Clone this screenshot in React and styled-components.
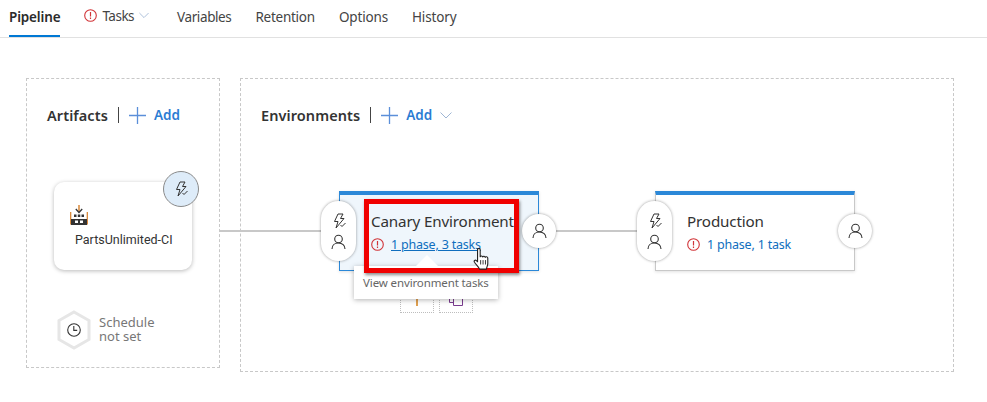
import styled, { createGlobalStyle } from "styled-components";

const Global = createGlobalStyle`
  html, body { margin: 0; padding: 0; background: #fff; }
  body { font-family: "Noto Sans", "Open Sans", sans-serif; color: #333; overflow: hidden; }
`;

const Page = styled.div`
  width: 987px;
  height: 402px;
`;

const TabBar = styled.div`
  display: flex;
  align-items: stretch;
  height: 37px;
  padding-left: 9px;
  gap: 24px;
  border-bottom: 1px solid #e1e1e1;
  box-sizing: content-box;
`;

const Tab = styled.div`
  display: flex;
  align-items: center;
  gap: 5px;
  height: 37px;
  box-sizing: border-box;
  font-size: 13.5px;
  letter-spacing: ${(p) => p.$track ?? -0.15}px;
  padding-bottom: ${(p) => (p.$raised ? "4px" : "2px")};
  color: ${(p) => (p.$active ? "#2b2b2b" : "#444")};
  font-weight: ${(p) => (p.$active ? 600 : 400)};
  border-bottom: 2px solid ${(p) => (p.$active ? "#0078d4" : "transparent")};
  margin-right: ${(p) => p.$gap || 0}px;
`;

const Canvas = styled.div`
  display: flex;
  align-items: flex-start;
  gap: 20px;
  padding: 40px 0 0 26px;
`;

const Panel = styled.div`
  box-sizing: border-box;
  width: ${(p) => p.$w}px;
  height: ${(p) => p.$h}px;
  border: 1px dashed #c8c8c8;
  padding: 25px 0 0 20px;
`;

const Header = styled.div`
  display: flex;
  align-items: center;
  height: 22px;
`;

const HeaderTitle = styled.span`
  font-size: 14.5px;
  font-weight: 600;
  letter-spacing: 0.08px;
  color: #333;
`;

const Divider = styled.span`
  width: 1px;
  height: 16px;
  background: #444;
  margin: 0 10px;
`;

const AddLink = styled.span`
  font-size: 13.5px;
  font-weight: 600;
  color: #2b7cd3;
  margin: 0 8px;
`;

const ArtifactCard = styled.div`
  position: relative;
  box-sizing: border-box;
  width: 138px;
  height: 88px;
  margin: 56px 0 0 7px;
  border-radius: 10px;
  background: #fff;
  box-shadow: 0 1px 4px rgba(0, 0, 0, 0.28);
  padding: 23px 0 0 16px;
`;

const ArtifactName = styled.div`
  font-family: Roboto, "Noto Sans", sans-serif;
  font-size: 12.5px;
  margin: 7px 0 0 5px;
  color: #333;
  white-space: nowrap;
`;

const TriggerBadge = styled.div`
  position: absolute;
  top: -11px;
  right: -7px;
  width: 36px;
  height: 36px;
  box-sizing: border-box;
  border-radius: 50%;
  border: 1px solid #8a8a8a;
  background: #deecf9;
  display: flex;
  align-items: center;
  justify-content: center;
`;

const Schedule = styled.div`
  display: flex;
  align-items: center;
  gap: 8px;
  margin: 40px 0 0 10px;
`;

const ScheduleText = styled.div`
  font-size: 13px;
  line-height: 14px;
  color: #777;
  padding-bottom: 2px;
`;

const Stage = styled.div`
  display: flex;
  align-items: center;
  margin: 65px 0 0 -42px;
`;

const Connector = styled.div`
  width: ${(p) => p.$w}px;
  height: 2px;
  background: #c8c8c8;
  flex: none;
`;

const Pill = styled.div`
  position: relative;
  z-index: 2;
  flex: none;
  box-sizing: border-box;
  width: 35px;
  height: 60px;
  margin-right: -17px;
  border-radius: 18px;
  background: #fff;
  box-shadow: 0 0 3px rgba(0, 0, 0, 0.4);
  display: flex;
  flex-direction: column;
  align-items: center;
  justify-content: center;
  gap: 5px;
`;

const Round = styled.div`
  position: relative;
  z-index: 2;
  flex: none;
  width: 34px;
  height: 34px;
  margin-left: -17px;
  border-radius: 50%;
  background: #fff;
  box-shadow: 0 0 3px rgba(0, 0, 0, 0.4);
  display: flex;
  align-items: center;
  justify-content: center;
`;

const EnvCard = styled.div`
  position: relative;
  flex: none;
  box-sizing: border-box;
  width: 200px;
  height: 80px;
  padding: 15px 0 0 31px;
  background: ${(p) => (p.$selected ? "#eff6fc" : "#fff")};
  border: 1px solid ${(p) => (p.$selected ? "#2b88d8" : "#c8c8c8")};
  border-top: 4px solid #2b88d8;
  box-shadow: 0 1px 3px rgba(0, 0, 0, 0.12);
`;

const EnvTitle = styled.div`
  font-size: 15.2px;
  line-height: 22px;
  color: #333;
  letter-spacing: -0.15px;
  white-space: nowrap;
`;

const EnvStatus = styled.div`
  display: flex;
  align-items: center;
  gap: 7px;
  height: 22px;
  margin-top: 1px;
`;

const TaskLink = styled.span`
  font-size: 12.5px;
  color: #106ebe;
  letter-spacing: -0.2px;
  text-decoration: ${(p) => (p.$hover ? "underline" : "none")};
  white-space: nowrap;
`;

const Highlight = styled.div`
  position: absolute;
  z-index: 5;
  left: 24px;
  top: 4px;
  width: 155px;
  height: 74px;
  box-sizing: border-box;
  border: 5px solid #f00000;
  box-shadow: 1px 2px 3px rgba(0, 0, 0, 0.45);
`;

const Tooltip = styled.div`
  position: absolute;
  z-index: 4;
  left: 14px;
  top: 71px;
  width: 144px;
  height: 33px;
  box-sizing: border-box;
  background: #fff;
  box-shadow: 0 1px 5px rgba(0, 0, 0, 0.3);
  font-size: 11.5px;
  letter-spacing: -0.12px;
  color: #666;
  padding: 9px 0 0 9px;
  white-space: nowrap;
  &::before {
    content: "";
    position: absolute;
    left: 62px;
    top: -11px;
    width: 0;
    height: 0;
    border-left: 11px solid transparent;
    border-right: 11px solid transparent;
    border-bottom: 11px solid #fff;
  }
`;

const Ghost = styled.div`
  position: absolute;
  z-index: 1;
  left: ${(p) => p.$left}px;
  top: 92px;
  width: 34px;
  height: 26px;
  box-sizing: border-box;
  border: 1px dotted #bdbdbd;
  padding-bottom: 6px;
  display: flex;
  align-items: flex-end;
  justify-content: center;
  & > svg {
    display: block;
  }
`;

const Cursor = styled.svg`
  position: absolute;
  z-index: 6;
  left: 133px;
  top: 53px;
`;

const Bolt = ({ size = 16 }) => (
  <svg width={size} height={size} viewBox="0 0 16 16" fill="none" stroke="#333" strokeWidth="1">
    <path d="M7 1h5L9.500 5.500H13L5 15l2-6.500H3.500z" />
    <path d="M9.500 12l1.500 1.500 3.500-3.500" />
  </svg>
);

const Person = () => (
  <svg width="15" height="16" viewBox="0 0 15 16" fill="none" stroke="#333" strokeWidth="1.1">
    <circle cx="7.500" cy="5" r="3.800" />
    <path d="M1 15c0-3.600 2.700-6 6.500-6s6.500 2.400 6.500 6" />
  </svg>
);

const Warn = () => (
  <svg width="13" height="13" viewBox="0 0 13 13" fill="none" stroke="#d13438">
    <circle cx="6.500" cy="6.500" r="5.800" strokeWidth="1.100" />
    <path d="M6.500 3v4.400M6.500 8.600v1.300" strokeWidth="1.200" />
  </svg>
);

const Plus = () => (
  <svg width="17" height="17" viewBox="0 0 17 17" stroke="#5b8fd9" strokeWidth="1.300">
    <path d="M8.500 0v17M0 8.500h17" />
  </svg>
);

const Chevron = ({ w = 12 }) => (
  <svg width={w} height="7" viewBox="0 0 12 7" fill="none" stroke="#9fb6d4" strokeWidth="1">
    <path d="M.5.5 6 6l5.500-5.500" />
  </svg>
);

const BuildIcon = () => (
  <svg width="18" height="20" viewBox="0 0 18 20" style={{ display: "block" }}>
    <path d="M9 0v6.500" stroke="#d67f2a" strokeWidth="1.400" />
    <path d="M5.800 4 9 7.500 12.200 4" fill="none" stroke="#333" strokeWidth="1.300" />
    <path d="M.7 7v12h16.600V7" fill="none" stroke="#d67f2a" strokeWidth="1.200" />
    <path d="M1 14h16v6H1z" fill="#333" />
    <path d="M4 9.500h2.500V12H4zM7.800 9.500h2.500V12H7.800zM11.500 9.500H14V12h-2.500z" fill="#333" />
    <path d="M5 15.500h3V18H5zM10 15.500h3V18h-3z" fill="#fff" />
  </svg>
);

const HexClock = () => (
  <svg width="34" height="40" viewBox="0 0 34 40" fill="none">
    <path d="M17 2 32 10.500v19L17 38 2 29.500v-19z" fill="#fff" stroke="#e6e6e6" strokeWidth="3" />
    <circle cx="17" cy="20" r="6.300" stroke="#333" strokeWidth="1.100" />
    <path d="M16.800 16v4.400h3.400" stroke="#333" strokeWidth="1.100" />
  </svg>
);

const HandCursor = () => (
  <Cursor width="19" height="22" viewBox="0 0 17 20">
    <path
      d="M4 1.500c0-1.500 2.400-1.500 2.400 0V8c.2-1 2.200-1 2.300.2 .2-1 2.200-1 2.300.3 .3-.9 2.300-.7 2.300.7v4.800c0 2-.9 3-1.200 5.200H5.800C4.800 17 2.600 15.200 1.200 13 .3 11.500 1.900 10.500 3 11.500l1 1z"
      fill="#fff"
      stroke="#222"
      strokeWidth="1"
      strokeLinejoin="round"
    />
    <path d="M6.800 11v4M9 11v4M11.200 11v4" stroke="#222" strokeWidth=".8" />
  </Cursor>
);

export default function App() {
  return (
    <Page>
      <Global />
      <TabBar>
        <Tab $active>Pipeline</Tab>
        <Tab $raised $gap={4} $track={-0.5}>
          <Warn />
          Tasks
          <Chevron w={10} />
        </Tab>
        <Tab $track={-0.4}>Variables</Tab>
        <Tab $track={-0.25}>Retention</Tab>
        <Tab>Options</Tab>
        <Tab>History</Tab>
      </TabBar>
      <Canvas>
        <Panel $w={194} $h={290}>
          <Header>
            <HeaderTitle>Artifacts</HeaderTitle>
            <Divider />
            <Plus />
            <AddLink>Add</AddLink>
          </Header>
          <ArtifactCard>
            <BuildIcon />
            <ArtifactName>PartsUnlimited-CI</ArtifactName>
            <TriggerBadge>
              <Bolt />
            </TriggerBadge>
          </ArtifactCard>
          <Schedule>
            <HexClock />
            <ScheduleText>
              Schedule
              <br />
              not set
            </ScheduleText>
          </Schedule>
        </Panel>
        <Panel $w={714} $h={294}>
          <Header>
            <HeaderTitle>Environments</HeaderTitle>
            <Divider />
            <Plus />
            <AddLink>Add</AddLink>
            <Chevron />
          </Header>
          <Stage>
            <Connector $w={102} />
            <Pill>
              <Bolt />
              <Person />
            </Pill>
            <EnvCard $selected>
              <EnvTitle>Canary Environment</EnvTitle>
              <EnvStatus>
                <Warn />
                <TaskLink $hover>1 phase, 3 tasks</TaskLink>
              </EnvStatus>
              <Ghost $left={60}>
                <svg width="2" height="7">
                  <rect width="2" height="7" fill="#e0a050" />
                </svg>
              </Ghost>
              <Ghost $left={99}>
                <svg width="14" height="7" fill="none" stroke="#7a3b8f">
                  <path d="M.5 0v3.500h4M4.500 0v6.500h9V0" />
                </svg>
              </Ghost>
              <Tooltip>View environment tasks</Tooltip>
              <Highlight />
              <HandCursor />
            </EnvCard>
            <Round>
              <Person />
            </Round>
            <Connector $w={81} />
            <Pill>
              <Bolt />
              <Person />
            </Pill>
            <EnvCard>
              <EnvTitle>Production</EnvTitle>
              <EnvStatus>
                <Warn />
                <TaskLink>1 phase, 1 task</TaskLink>
              </EnvStatus>
            </EnvCard>
            <Round>
              <Person />
            </Round>
          </Stage>
        </Panel>
      </Canvas>
    </Page>
  );
}
